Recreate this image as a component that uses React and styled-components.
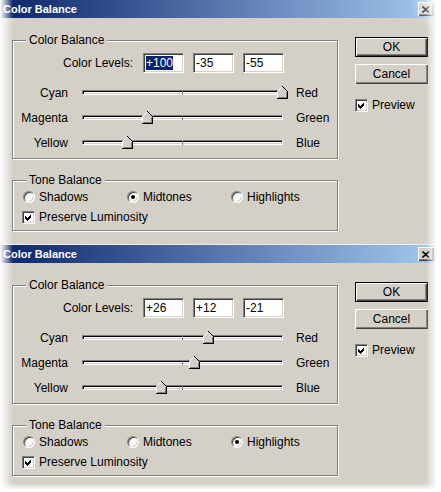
import React from 'react'
import styled, { createGlobalStyle } from 'styled-components'

const GlobalStyle = createGlobalStyle`
  html, body {
    margin: 0;
    padding: 0;
    background: #fff;
  }
  body {
    font-family: "Liberation Sans", Arial, sans-serif;
    font-size: 12px;
    color: #000;
  }
`

const Page = styled.div`
  position: relative;
  width: 441px;
  height: 492px;
  overflow: hidden;
  background: #fff;
`

// soft torn-paper fade around the screenshot edges
const EdgeFade = styled.div`
  position: absolute;
  inset: 0;
  pointer-events: none;
  background:
    linear-gradient(to right, #fff 0, rgba(255,255,255,.8) 3px, rgba(255,255,255,0) 13px),
    linear-gradient(to left, #fff 0, #fff 4px, rgba(255,255,255,0) 15px),
    linear-gradient(to top, #fff 0, #fff 2px, rgba(255,255,255,0) 9px),
    radial-gradient(circle at 100% 0, rgba(255,255,255,.75) 0, rgba(255,255,255,0) 32px);
`

const Window = styled.div`
  width: 441px;
  background: #d4d0c8;
  border-bottom: ${p => (p.$divider ? '1px solid #eeece8' : 'none')};
`

const TitleBar = styled.div`
  height: 18px;
  display: flex;
  align-items: center;
  justify-content: space-between;
  padding: 0 7px 0 3px;
  background: linear-gradient(to right, #0a246a, #a6caf0);
  color: #fff;
  font-weight: bold;
  font-size: 11px;
`

const CloseButton = styled.div`
  width: 16px;
  height: 14px;
  box-sizing: border-box;
  background: #d4d0c8;
  box-shadow: inset 1px 1px 0 #fff, inset -1px -1px 0 #404040, inset -2px -2px 0 #808080;
  display: flex;
  align-items: center;
  justify-content: center;
`

const Body = styled.div`
  height: 226px;
  box-sizing: border-box;
  display: flex;
  padding: 19px 0 0 12px;
`

const LeftColumn = styled.div`
  width: 326px;
  padding-top: 3px;
`

const RightColumn = styled.div`
  margin-left: 17px;
  display: flex;
  flex-direction: column;
`

const GroupBox = styled.div`
  position: relative;
  box-sizing: border-box;
  width: 326px;
  border: 1px solid #808080;
  box-shadow: inset 1px 1px 0 #fff, 1px 1px 0 #fff;
  padding: ${p => p.$pad};
  & + & {
    margin-top: 21px;
  }
`

const Legend = styled.span`
  position: absolute;
  top: -8px;
  left: 13px;
  padding: 0 3px;
  line-height: 14px;
  background: #d4d0c8;
`

const LevelsRow = styled.div`
  display: flex;
  align-items: center;
  height: 20px;
`

const LevelsLabel = styled.span`
  width: 120px;
  margin-right: 10px;
  text-align: right;
`

const Field = styled.div`
  width: 41px;
  height: 20px;
  box-sizing: border-box;
  margin-right: 9px;
  padding-left: 2px;
  background: #fff;
  border: 1px solid;
  border-color: #808080 #fff #fff #808080;
  box-shadow: inset 1px 1px 0 #404040, inset -1px -1px 0 #d4d0c8;
  display: flex;
  align-items: center;
  line-height: 14px;
`

const Selected = styled.span`
  background: #0a246a;
  color: #fff;
`

const SliderList = styled.div`
  margin-top: 7px;
`

const SliderRow = styled.div`
  display: flex;
  align-items: center;
  height: 25px;
`

const SideLabel = styled.span`
  width: ${p => (p.$left ? '55px' : 'auto')};
  text-align: ${p => (p.$left ? 'right' : 'left')};
  margin: ${p => (p.$left ? '0 14px 0 0' : '0 0 0 13px')};
`

const TrackWrap = styled.div`
  position: relative;
  width: 201px;
  height: 25px;
  display: flex;
  align-items: center;
`

const Track = styled.div`
  width: 100%;
  height: 5px;
  box-sizing: border-box;
  background: #fff;
  border: 1px solid;
  border-color: #808080 #fff #fff #808080;
  box-shadow: inset 1px 1px 0 #000, inset -1px -1px 0 #d4d0c8;
`

const Tick = styled.div`
  position: absolute;
  left: 100px;
  top: 11px;
  width: 1px;
  height: 4px;
  background: #808080;
`

const ThumbHolder = styled.div`
  position: absolute;
  top: 6px;
  width: 11px;
  height: 13px;
  display: flex;
`

const ToneRow = styled.div`
  display: flex;
  align-items: center;
  height: 14px;
  padding-left: ${p => p.$indent};
  margin-top: ${p => p.$gap || '0'};
`

const RadioOption = styled.label`
  width: 104px;
  display: flex;
  align-items: center;
  gap: 4px;
`

const RadioDot = styled.span`
  position: relative;
  width: 12px;
  height: 12px;
  box-sizing: border-box;
  border-radius: 50%;
  background: #fff;
  border: 1px solid;
  border-color: #808080 #fff #fff #808080;
  box-shadow: inset 1px 1px 0 #404040, inset -1px -1px 0 #d4d0c8;
  &::after {
    content: '';
    display: ${p => (p.$on ? 'block' : 'none')};
    position: absolute;
    left: 3px;
    top: 3px;
    width: 4px;
    height: 4px;
    border-radius: 50%;
    background: #000;
  }
`

const CheckOption = styled.label`
  display: flex;
  align-items: center;
  gap: 4px;
`

const CheckBox = styled.span`
  width: 13px;
  height: 13px;
  box-sizing: border-box;
  background: #fff;
  border: 1px solid;
  border-color: #808080 #fff #fff #808080;
  box-shadow: inset 1px 1px 0 #404040, inset -1px -1px 0 #d4d0c8;
  display: flex;
`

const Button = styled.div`
  width: 73px;
  height: 20px;
  box-sizing: border-box;
  display: flex;
  align-items: center;
  justify-content: center;
  border: ${p => (p.$default ? '1px solid #000' : 'none')};
  box-shadow: inset 1px 1px 0 #fff, inset -1px -1px 0 #404040, inset -2px -2px 0 #808080;
  & + & {
    margin-top: 7px;
  }
`

const PreviewRow = styled.div`
  margin-top: 14px;
  height: 14px;
  display: flex;
  align-items: center;
`

const Thumb = () => (
  <svg width="11" height="13" viewBox="0 0 11 13" shapeRendering="crispEdges">
    <polygon points="0,5 5,0 10,5 10,12 0,12" fill="#d4d0c8" />
    <polyline points="0.5,12 0.5,5.5 5.5,0.5" fill="none" stroke="#fff" />
    <polyline points="5.5,0.5 10.5,5.5 10.5,12.5 0,12.5" fill="none" stroke="#000" />
    <polyline points="9.5,6 9.5,11.5 1,11.5" fill="none" stroke="#808080" />
  </svg>
)

const CheckMark = () => (
  <svg width="11" height="11" viewBox="0 0 11 11" shapeRendering="crispEdges">
    <polygon points="2,4 4,6 8,2 8,5 4,9 2,7" fill="#000" />
  </svg>
)

const CloseGlyph = () => (
  <svg width="8" height="7" viewBox="0 0 8 7">
    <path d="M0.5 0.5 L7 6.5 M7 0.5 L0.5 6.5" stroke="#000" strokeWidth="1.6" />
  </svg>
)

const sliders = [
  ['Cyan', 'Red'],
  ['Magenta', 'Green'],
  ['Yellow', 'Blue'],
]

const tones = ['Shadows', 'Midtones', 'Highlights']

function Dialog({ levels, tone, selectFirst, divider }) {
  return (
    <Window $divider={divider}>
      <TitleBar>
        <span>Color Balance</span>
        <CloseButton>
          <CloseGlyph />
        </CloseButton>
      </TitleBar>
      <Body>
        <LeftColumn>
          <GroupBox $pad="12px 0 3px 0">
            <Legend>Color Balance</Legend>
            <LevelsRow>
              <LevelsLabel>Color Levels:</LevelsLabel>
              {levels.map((v, i) => {
                const text = v > 0 ? `+${v}` : `${v}`
                return (
                  <Field key={i}>
                    {selectFirst && i === 0 ? <Selected>{text}</Selected> : text}
                  </Field>
                )
              })}
            </LevelsRow>
            <SliderList>
              {sliders.map(([from, to], i) => (
                <SliderRow key={from}>
                  <SideLabel $left>{from}</SideLabel>
                  <TrackWrap>
                    <Track />
                    <Tick />
                    <ThumbHolder style={{ left: 100 + levels[i] - 5 }}>
                      <Thumb />
                    </ThumbHolder>
                  </TrackWrap>
                  <SideLabel>{to}</SideLabel>
                </SliderRow>
              ))}
            </SliderList>
          </GroupBox>
          <GroupBox $pad="9px 0 6px 0">
            <Legend>Tone Balance</Legend>
            <ToneRow $indent="10px">
              {tones.map(t => (
                <RadioOption key={t}>
                  <RadioDot $on={t === tone} />
                  {t}
                </RadioOption>
              ))}
            </ToneRow>
            <ToneRow $indent="9px" $gap="6px">
              <CheckOption>
                <CheckBox>
                  <CheckMark />
                </CheckBox>
                Preserve Luminosity
              </CheckOption>
            </ToneRow>
          </GroupBox>
        </LeftColumn>
        <RightColumn>
          <Button $default>OK</Button>
          <Button>Cancel</Button>
          <PreviewRow>
            <CheckOption>
              <CheckBox>
                <CheckMark />
              </CheckBox>
              Preview
            </CheckOption>
          </PreviewRow>
        </RightColumn>
      </Body>
    </Window>
  )
}

export default function App() {
  return (
    <>
      <GlobalStyle />
      <Page>
        <Dialog levels={[100, -35, -55]} tone="Midtones" selectFirst divider />
        <Dialog levels={[26, 12, -21]} tone="Highlights" />
        <EdgeFade />
      </Page>
    </>
  )
}
